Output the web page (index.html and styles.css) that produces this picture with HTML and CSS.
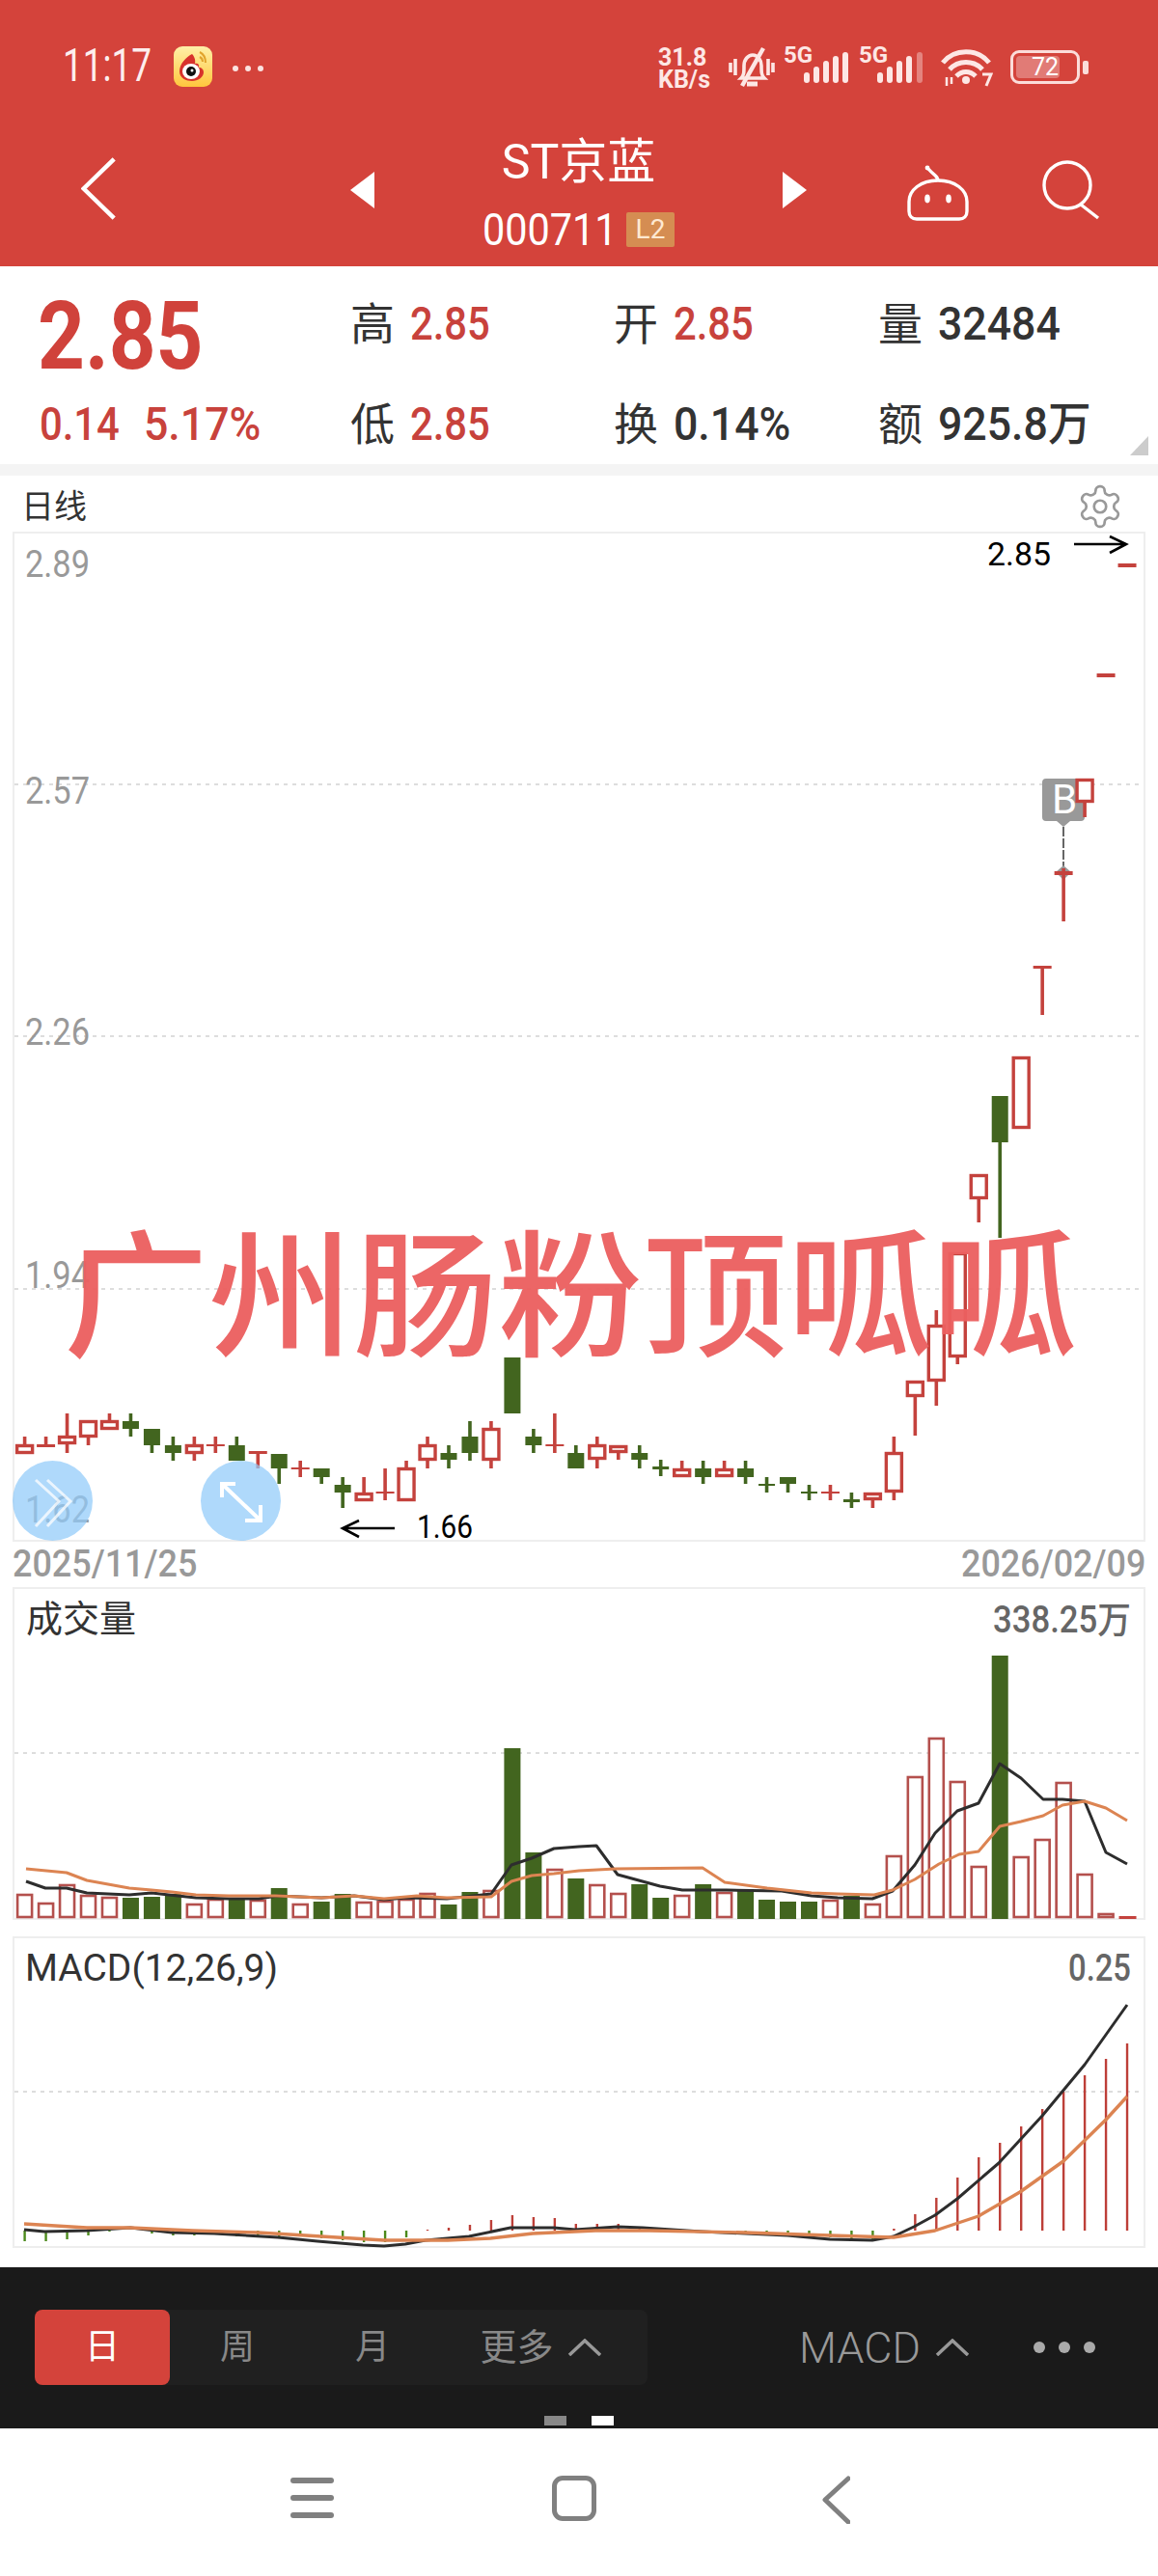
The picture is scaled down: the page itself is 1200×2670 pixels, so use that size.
FILE: index.html
```html
<!DOCTYPE html>
<html lang="zh-CN">
<head>
    <meta charset="UTF-8">
    <meta name="viewport" content="width=device-width, initial-scale=1.0">
    <title>ST京蓝 000711</title>
    <link rel="stylesheet" href="styles.css">
</head>
<body>
    <div class="top">
        <div class="status">
            <div class="status-left">
                <span class="time sq">11:17</span>
                <svg class="weibo" viewBox="0 0 40 42">
                    <defs>
                        <linearGradient id="wb" x1="0" y1="0" x2="0" y2="1">
                            <stop offset="0" stop-color="#fff0a8"/>
                            <stop offset="1" stop-color="#ffc63d"/>
                        </linearGradient>
                    </defs>
                    <rect width="40" height="42" rx="9" fill="url(#wb)"/>
                    <path d="M19 8c-6 3-13 10-13 18 0 7 7 10 13 10s12-4 12-9c0-3-2-5-5-5 1-3-1-5-4-4 1-4-1-8-3-10z" fill="#d8322c"/>
                    <ellipse cx="18" cy="26" rx="9" ry="8" fill="#fff"/>
                    <circle cx="18" cy="26" r="5" fill="#111"/>
                    <circle cx="19" cy="25" r="1.5" fill="#fff"/>
                    <path d="M27 6c4 2 6 6 6 11M27 11c2 1 3 3 3 5" fill="none" stroke="#e2a32c" stroke-width="2"/>
                </svg>
                <div class="more-dots"><i></i><i></i><i></i></div>
            </div>
            <div class="status-right">
                <div class="speed"><span>31.8</span><span>KB/s</span></div>
                <svg class="bell" viewBox="0 0 48 44" fill="none" stroke="#fde7e5" stroke-width="3.6">
                    <path d="M13 33c3-3 3-6 3-13 0-6 4-11 9-11s9 5 9 11c0 7 0 10 3 13z"/>
                    <path d="M19 39h11" stroke-width="5"/>
                    <path d="M36 2 14 41" stroke-width="4.5"/>
                    <path d="M2 17v10M7 13v17M46 17v10M41 13v17"/>
                </svg>
                <svg class="signal" viewBox="0 0 69 38">
                    <text class="net" x="0" y="17">5G</text>
                    <g fill="#fde7e5">
                        <rect x="21" y="27" width="6" height="11" rx="3"/>
                        <rect x="31" y="21" width="6" height="17" rx="3"/>
                        <rect x="41" y="15" width="6" height="23" rx="3"/>
                        <rect x="51" y="10" width="6" height="28" rx="3"/>
                        <rect x="61" y="6" width="6" height="32" rx="3"/>
                    </g>
                </svg>
                <svg class="signal" viewBox="0 0 69 38">
                    <text class="net" x="0" y="17">5G</text>
                    <g fill="#fde7e5">
                        <rect x="19" y="27" width="6" height="11" rx="3"/>
                        <rect x="29" y="21" width="6" height="17" rx="3"/>
                        <rect x="39" y="15" width="6" height="23" rx="3"/>
                        <rect x="49" y="10" width="6" height="28" rx="3"/>
                        <rect x="60" y="6" width="6" height="32" rx="3" opacity=".4"/>
                    </g>
                </svg>
                <svg class="wifi" viewBox="0 0 54 40" fill="none" stroke="#fde7e5" stroke-width="5">
                    <path d="M2 15C14 0 38 0 50 15"/>
                    <path d="M9 22c9-10 25-10 34 0"/>
                    <path d="M16 29c6-6 14-6 20 0"/>
                    <circle cx="26" cy="33" r="4" fill="#fde7e5" stroke="none"/>
                    <path d="M6 30v9M11 30v7" stroke-width="2.5"/>
                    <path d="M43 27h9l-5 12" stroke-width="3"/>
                </svg>
                <div class="battery">
                    <div class="battery-fill"></div>
                    <span class="battery-num">72</span>
                </div>
                <div class="battery-nub"></div>
            </div>
        </div>
        <div class="nav">
            <svg class="back" viewBox="0 0 40 70" fill="none" stroke="#fff" stroke-width="5">
                <path d="M38 1 3 35l35 34"/>
            </svg>
            <div class="tri tri-left"></div>
            <div class="title">
                <div class="title-name">ST京蓝</div>
                <div class="title-code">
                    <span class="code sq">000711</span>
                    <span class="badge-l2">L2</span>
                </div>
            </div>
            <div class="tri tri-right"></div>
            <svg class="robot" viewBox="0 0 64 58" fill="none" stroke="#fff" stroke-width="3.4">
                <path d="M32 17c0-6-4-6-10-13"/>
                <circle cx="21" cy="3" r="2.4" fill="#fff" stroke="none"/>
                <path d="M2 38C2 26 14 16 32 16s30 10 30 22v10c0 5-3 8-8 8H10c-5 0-8-3-8-8z"/>
                <ellipse cx="21" cy="35" rx="2.8" ry="4.4" fill="#fff" stroke="none"/>
                <ellipse cx="43" cy="35" rx="2.8" ry="4.4" fill="#fff" stroke="none"/>
            </svg>
            <svg class="search" viewBox="0 0 60 62" fill="none" stroke="#fff" stroke-width="3.4">
                <circle cx="26" cy="26" r="24"/>
                <path d="M40 46 58 60"/>
            </svg>
        </div>
    </div>

    <div class="quote">
        <div class="cell"><span class="price sq">2.85</span></div>
        <div class="cell"><span class="lab">高</span><span class="val up sq">2.85</span></div>
        <div class="cell"><span class="lab">开</span><span class="val up sq">2.85</span></div>
        <div class="cell"><span class="lab">量</span><span class="val wide sq">32484</span></div>
        <div class="cell change"><span class="val up sq">0.14</span><span class="val up wide sq">5.17%</span></div>
        <div class="cell"><span class="lab">低</span><span class="val up sq">2.85</span></div>
        <div class="cell"><span class="lab">换</span><span class="val wide sq">0.14%</span></div>
        <div class="cell"><span class="lab">额</span><span class="val wide sq">925.8万</span></div>
        <div class="corner"></div>
    </div>
    <div class="divider"></div>

    <div class="charts">
        <div class="chart-head">
            <span>日线</span>
            <svg class="gear" viewBox="0 0 24 24" fill="none" stroke="#999" stroke-width="1.3">
                <path d="M12.22 2h-.44a2 2 0 0 0-2 2v.18a2 2 0 0 1-1 1.73l-.43.25a2 2 0 0 1-2 0l-.15-.08a2 2 0 0 0-2.73.73l-.22.38a2 2 0 0 0 .73 2.73l.15.1a2 2 0 0 1 1 1.72v.51a2 2 0 0 1-1 1.74l-.15.09a2 2 0 0 0-.73 2.73l.22.38a2 2 0 0 0 2.73.73l.15-.08a2 2 0 0 1 2 0l.43.25a2 2 0 0 1 1 1.73V20a2 2 0 0 0 2 2h.44a2 2 0 0 0 2-2v-.18a2 2 0 0 1 1-1.73l.43-.25a2 2 0 0 1 2 0l.15.08a2 2 0 0 0 2.73-.73l.22-.39a2 2 0 0 0-.73-2.73l-.15-.08a2 2 0 0 1-1-1.74v-.5a2 2 0 0 1 1-1.74l.15-.09a2 2 0 0 0 .73-2.73l-.22-.38a2 2 0 0 0-2.73-.73l-.15.08a2 2 0 0 1-2 0l-.43-.25a2 2 0 0 1-1-1.73V4a2 2 0 0 0-2-2z"/>
                <circle cx="12" cy="12" r="3"/>
            </svg>
        </div>
        <div class="panel kline">
            <svg id="klineSvg" class="plot" viewBox="15 553 1170 1043"></svg>
            <div class="float-btn btn-one">
                <svg viewBox="0 0 83 83" fill="none" stroke="#fff" stroke-width="3" opacity=".75">
                    <path d="M24 20 48 42 24 68M36 20 60 42 36 68"/>
                </svg>
            </div>
            <div class="float-btn btn-two">
                <svg viewBox="0 0 83 83" fill="none" stroke="#fff" stroke-width="4">
                    <path d="M22 24 62 62M22 38V24h14M62 46v16H46"/>
                </svg>
            </div>
            <div class="slogan">广州肠粉顶呱呱</div>
        </div>
        <div class="dates">
            <span class="date sq">2025/11/25</span>
            <span class="date sq date-end">2026/02/09</span>
        </div>
        <div class="panel volume">
            <svg id="volSvg" class="plot" viewBox="15 1647 1170 341"></svg>
        </div>
        <div class="panel macd">
            <svg id="macdSvg" class="plot" viewBox="15 2009 1170 319"></svg>
        </div>
    </div>

    <div class="bar">
        <div class="bar-row">
            <div class="periods">
                <span class="period active">日</span>
                <span class="period">周</span>
                <span class="period">月</span>
                <span class="period period-more">更多
                    <svg class="caret" viewBox="0 0 36 18" fill="none" stroke="#999" stroke-width="3.5"><path d="M2 17 18 2l16 15"/></svg>
                </span>
            </div>
            <span class="indicator">MACD
                <svg class="caret" viewBox="0 0 36 18" fill="none" stroke="#999" stroke-width="3.5"><path d="M2 17 18 2l16 15"/></svg>
            </span>
            <div class="dots"><i></i><i></i><i></i></div>
        </div>
        <div class="pager"><i></i><i class="on"></i></div>
    </div>

    <div class="sysnav">
        <div class="burger"><i></i><i></i><i></i></div>
        <div class="home"></div>
        <svg class="sys-back" viewBox="0 0 30 50" fill="none" stroke="#808080" stroke-width="5" stroke-linecap="round" stroke-linejoin="round">
            <path d="M28 3 4 25l24 23"/>
        </svg>
    </div>

    <script>
    const NS = 'http://www.w3.org/2000/svg'
    const RED = '#c4423d'
    const GREEN = '#42651f'
    const X0 = 25.6
    const STEP = 21.97

    function add(svg, tag, attrs, text) {
        const el = document.createElementNS(NS, tag)
        for (const k in attrs) el.setAttribute(k, attrs[k])
        if (text) el.textContent = text
        svg.appendChild(el)
        return el
    }

    function gridLine(svg, y) {
        add(svg, 'line', { x1: 15, x2: 1185, y1: y, y2: y, class: 'grid' })
    }

    function polyline(svg, pts, color, width) {
        add(svg, 'polyline', {
            points: pts.map(p => p.join(',')).join(' '),
            fill: 'none', stroke: color, 'stroke-width': width, 'stroke-linejoin': 'round'
        })
    }

    // type, wick top, body top, body bottom, wick bottom
    const candles = [
        ['r',1489,1497,1507,1507],['r',1489,1497,1500,1500],['r',1465,1488,1497,1506],['r',1472,1472,1490,1498],
        ['r',1465,1472,1482,1482],['g',1465,1473,1481,1489],['g',1481,1481,1498,1506],['g',1489,1498,1506,1514],
        ['r',1489,1497,1507,1514],['r',1489,1497,1499,1506],['g',1489,1498,1514,1514],['r',1504,1504,1507,1522],
        ['g',1507,1507,1522,1538],['r',1514,1521,1523,1531],['g',1522,1522,1531,1538],['g',1531,1539,1547,1563],
        ['r',1531,1547,1556,1556],['r',1522,1546,1548,1555],['r',1514,1521,1556,1556],['r',1489,1497,1514,1522],
        ['g',1498,1506,1513,1522],['g',1473,1489,1506,1514],['r',1473,1480,1514,1522],['g',1407,1407,1465,1465],
        ['g',1481,1489,1498,1506],['r',1465,1497,1499,1506],['g',1498,1506,1522,1522],['r',1489,1497,1513,1522],
        ['r',1498,1498,1506,1513],['g',1498,1506,1513,1522],['g',1513,1520,1523,1530],['r',1514,1522,1531,1531],
        ['g',1514,1522,1531,1538],['r',1514,1522,1531,1531],['g',1514,1522,1531,1538],['g',1531,1538,1540,1547],
        ['g',1531,1531,1538,1547],['g',1539,1546,1548,1555],['r',1539,1546,1548,1555],['g',1547,1554,1557,1563],
        ['r',1547,1547,1555,1563],['r',1489,1505,1547,1555],['r',1431,1431,1448,1488],['r',1358,1373,1432,1457],
        ['r',1298,1298,1407,1414],['r',1217,1217,1243,1267],['g',1136,1136,1184,1283],['r',1095,1095,1170,1170],
        ['r',1001,1001,1004,1052],['r',900,903,907,955],['r',807,807,832,847],['r',698,698,702,702],['r',584,584,588,588]
    ]

    function drawKline() {
        const svg = document.getElementById('klineSvg')
        ;[813, 1074, 1336].forEach(y => gridLine(svg, y))
        const labels = [['2.89', 598], ['2.57', 833], ['2.26', 1083], ['1.94', 1335], ['1.62', 1578]]
        labels.forEach(l => add(svg, 'text', { x: 26, y: l[1], class: 'axis', textLength: 67, lengthAdjust: 'spacingAndGlyphs' }, l[0]))

        // B marker
        add(svg, 'path', { d: 'M1084 807h36a4 4 0 0 1 4 4v36a4 4 0 0 1-4 4h-11l-7 6-7-6h-11a4 4 0 0 1-4-4v-36a4 4 0 0 1 4-4z', fill: '#999' })
        add(svg, 'text', { x: 1090, y: 843, class: 'mark' }, 'B')
        add(svg, 'line', { x1: 1102, x2: 1102, y1: 857, y2: 900, stroke: '#666', 'stroke-width': 2, 'stroke-dasharray': '10 2' })
        add(svg, 'path', { d: 'M1094 904l8-7 8 7-8 8z', fill: '#999' })

        candles.forEach((c, i) => {
            const x = X0 + i * STEP
            const color = c[0] == 'r' ? RED : GREEN
            if (c[1] < c[2]) add(svg, 'line', { x1: x, x2: x, y1: c[1], y2: c[2], stroke: color, 'stroke-width': 3.6 })
            if (c[4] > c[3]) add(svg, 'line', { x1: x, x2: x, y1: c[3], y2: c[4], stroke: color, 'stroke-width': 3.6 })
            if (c[0] == 'r' && c[3] - c[2] > 4) {
                add(svg, 'rect', { x: x - 8, y: c[2] + 1.5, width: 16, height: c[3] - c[2] - 3, fill: '#fff', stroke: color, 'stroke-width': 3.4 })
            } else {
                const w = c[0] == 'r' ? 19 : 17
                add(svg, 'rect', { x: x - w / 2, y: c[2], width: w, height: c[3] - c[2], fill: color })
            }
        })

        add(svg, 'text', { x: 1023, y: 586, class: 'note', textLength: 66, lengthAdjust: 'spacingAndGlyphs' }, '2.85')
        add(svg, 'path', { d: 'M1113 564h54M1150 556l17 8-17 9', fill: 'none', stroke: '#000', 'stroke-width': 2.6 })
        add(svg, 'text', { x: 432, y: 1594, class: 'note', textLength: 58, lengthAdjust: 'spacingAndGlyphs' }, '1.66')
        add(svg, 'path', { d: 'M409 1584h-54M372 1576l-17 8 17 9', fill: 'none', stroke: '#000', 'stroke-width': 2.6 })
    }

    function drawVolume() {
        const svg = document.getElementById('volSvg')
        gridLine(svg, 1817)
        add(svg, 'text', { x: 27, y: 1691, class: 'panel-name' }, '成交量')
        add(svg, 'text', { x: 1029, y: 1692, class: 'panel-val', textLength: 143, lengthAdjust: 'spacingAndGlyphs' }, '338.25万')

        const bars = [
            ['r',1963],['r',1972],['r',1953],['r',1964],['r',1966],['g',1967],['g',1966],['g',1963],['r',1973],['r',1968],
            ['g',1968],['r',1969],['g',1957],['r',1973],['g',1971],['g',1963],['r',1971],['r',1970],['r',1968],['r',1962],
            ['g',1974],['g',1961],['r',1959],['g',1812],['g',1920],['r',1937],['g',1947],['r',1953],['r',1962],['g',1953],
            ['g',1967],['r',1964],['g',1953],['r',1961],['g',1958],['g',1969],['g',1971],['g',1971],['r',1969],['g',1965],
            ['r',1973],['r',1923],['r',1841],['r',1801],['r',1846],['r',1934],['g',1716],['r',1924],['r',1906],['r',1847],
            ['r',1942],['r',1983],['s',1986]
        ]
        bars.forEach((b, i) => {
            const x = X0 + i * STEP
            if (b[0] == 'r') {
                add(svg, 'rect', { x: x - 7.5, y: b[1] + 1, width: 15, height: 1988 - b[1] - 2, fill: '#fff', stroke: '#b4504d', 'stroke-width': 2.6 })
            } else {
                add(svg, 'rect', { x: x - 8.5, y: b[1], width: b[0] == 's' ? 18 : 17, height: 1989 - b[1], fill: b[0] == 's' ? RED : GREEN })
            }
        })

        polyline(svg, [[27,1950],[47,1957],[69,1957],[90,1962],[134,1964],[157,1962],[184,1965],[203,1967],[237,1968],[268,1968],[288,1965],[333,1967],[367,1965],[398,1969],[421,1967],[463,1968],[509,1963],[530,1933],[551,1926],[574,1916],[600,1914],[618,1913],[640,1943],[684,1955],[707,1959],[753,1959],[810,1960],[841,1965],[868,1967],[904,1968],[925,1960],[948,1933],[969,1900],[992,1877],[1014,1869],[1036,1828],[1058,1843],[1081,1865],[1101,1865],[1124,1867],[1146,1920],[1168,1932]], '#2d2d2d', 3)
        polyline(svg, [[27,1937],[69,1941],[90,1949],[134,1957],[157,1959],[178,1961],[203,1964],[237,1965],[287,1965],[333,1967],[367,1965],[398,1968],[432,1965],[463,1967],[509,1966],[530,1950],[551,1944],[574,1942],[600,1939],[638,1937],[728,1936],[751,1951],[795,1957],[841,1962],[868,1963],[906,1964],[925,1959],[948,1948],[973,1932],[994,1922],[1014,1919],[1036,1893],[1058,1888],[1081,1882],[1101,1871],[1124,1867],[1146,1874],[1168,1887]], '#dc8452', 3)
    }

    function drawMacd() {
        const svg = document.getElementById('macdSvg')
        gridLine(svg, 2168)
        add(svg, 'text', { x: 26, y: 2053, class: 'panel-name', textLength: 262, lengthAdjust: 'spacingAndGlyphs' }, 'MACD(12,26,9)')
        add(svg, 'text', { x: 1107, y: 2053, class: 'panel-val', textLength: 65, lengthAdjust: 'spacingAndGlyphs' }, '0.25')

        const zero = 2312
        const hist = [2323,2323,2321,2317,2313,2312,2315,2317,2317,2315,2318,2317,2318,2318,2320,2322,2324,2324,2319,
            2311,2309,2306,2301,2296,2298,2299,2305,2305,2305,2309,2312,2312,2312,2313,2313,2313,2315,2317,2319,2322,2322,
            2310,2295,2278,2257,2236,2221,2204,2186,2168,2151,2134,2118]
        hist.forEach((y, i) => {
            const x = X0 + i * STEP
            add(svg, 'line', { x1: x, x2: x, y1: zero, y2: y, stroke: y > zero ? '#4c8a1c' : '#bd3f38', 'stroke-width': 2.4 })
        })

        polyline(svg, [[25,2311],[46,2313],[90,2312],[135,2309],[178,2314],[222,2315],[288,2319],[329,2323],[376,2327],[398,2328],[420,2326],[441,2322],[486,2318],[529,2309],[574,2309],[596,2311],[640,2308],[666,2309],[727,2313],[816,2317],[860,2321],[904,2322],[926,2318],[947,2308],[969,2296],[992,2279],[1035,2242],[1080,2193],[1124,2140],[1168,2078]], '#2d2d2d', 3)
        polyline(svg, [[25,2305],[90,2309],[135,2309],[200,2312],[267,2314],[333,2318],[398,2322],[464,2322],[508,2320],[552,2315],[617,2312],[673,2312],[772,2314],[860,2317],[926,2319],[969,2312],[1014,2297],[1057,2272],[1102,2240],[1146,2197],[1168,2173]], '#dc8452', 3.4)
    }

    drawKline()
    drawVolume()
    drawMacd()
    </script>
</body>
</html>
```

FILE: styles.css
```css
* {
    box-sizing: border-box;
}
body {
    margin: 0;
    width: 1200px;
    background-color: #fff;
    font-family: Roboto, "Noto Sans CJK SC", sans-serif;
    color: #333;
}
.sq {
    display: inline-block;
    transform: scaleX(.87);
    transform-origin: 0 50%;
    white-space: nowrap;
}

/* red header */
.top {
    background-color: #d4433b;
    height: 276px;
    color: #fff;
}
.status {
    height: 130px;
    display: flex;
    justify-content: space-between;
    padding: 48px 72px 0 65px;
}
.status-left,
.status-right {
    display: flex;
    align-items: flex-start;
}
.time {
    width: 115px;
    font-size: 48px;
    line-height: 40px;
    transform: scaleX(.77);
    color: #fdeeee;
}
.weibo {
    width: 40px;
    height: 42px;
}
.more-dots {
    display: flex;
    gap: 7px;
    margin: 20px 0 0 21px;
}
.more-dots i {
    width: 6px;
    height: 6px;
    border-radius: 50%;
    background-color: #fbe3e1;
}
.speed {
    width: 57px;
    display: flex;
    flex-direction: column;
    font-size: 25px;
    line-height: 23px;
    font-weight: 700;
    white-space: nowrap;
    color: #fde7e5;
}
.bell {
    width: 48px;
    height: 44px;
    margin-left: 16px;
}
.signal {
    width: 69px;
    height: 38px;
    margin-left: 9px;
    overflow: visible;
}
.net {
    font-size: 24px;
    font-weight: 700;
    fill: #fde7e5;
}
.wifi {
    width: 54px;
    height: 40px;
    margin: 2px 0 0 16px;
}
.battery {
    position: relative;
    width: 72px;
    height: 35px;
    margin: 4px 0 0 18px;
    border: 3px solid #fbdcd9;
    border-radius: 9px;
    text-align: center;
}
.battery-fill {
    position: absolute;
    left: 3px;
    top: 3px;
    bottom: 3px;
    width: 45px;
    border-radius: 4px;
    background-color: rgba(255, 255, 255, .3);
}
.battery-num {
    position: relative;
    font-size: 25px;
    line-height: 29px;
    color: #fff;
}
.battery-nub {
    width: 6px;
    height: 14px;
    margin: 15px 0 0 3px;
    border-radius: 2px;
    background-color: #fbdcd9;
}
.nav {
    height: 146px;
    display: grid;
    grid-template-columns: 279px 25px 423px 25px 168px 136px;
    align-items: center;
    padding-left: 84px;
}
.back {
    width: 36px;
    height: 67px;
    margin-top: -15px;
}
.tri {
    width: 0;
    height: 0;
    border-top: 19px solid transparent;
    border-bottom: 19px solid transparent;
    margin-top: -12px;
}
.tri-left {
    border-right: 25px solid #fff;
}
.tri-right {
    border-left: 25px solid #fff;
}
.title {
    text-align: center;
    margin-top: -12px;
}
.title-name {
    font-size: 50px;
    line-height: 60px;
    height: 81px;
}
.title-code {
    display: flex;
    justify-content: center;
    align-items: center;
    gap: 15px;
}
.code {
    width: 134px;
    font-size: 46px;
    line-height: 38px;
    transform: scaleX(.9);
}
.badge-l2 {
    width: 50px;
    height: 36px;
    background-color: #d58d52;
    border-radius: 2px;
    font-size: 28px;
    line-height: 36px;
    color: #ffe9d2;
}
.robot {
    width: 64px;
    height: 58px;
    justify-self: end;
    margin-top: -6px;
}
.search {
    width: 60px;
    height: 62px;
    justify-self: end;
    margin-top: -12px;
}

/* quote block */
.quote {
    position: relative;
    height: 205px;
    display: grid;
    grid-template-columns: 324px 273px 274px 1fr;
    grid-auto-rows: 80px;
    row-gap: 24px;
    padding: 20px 0 0 41px;
}
.cell {
    display: flex;
    align-items: center;
    gap: 14px;
}
.lab {
    width: 46px;
    margin-left: -2px;
    font-size: 46px;
    line-height: 80px;
}
.val {
    font-size: 48px;
    font-weight: 500;
    line-height: 80px;
    width: 100px;
    margin-left: 2px;
    color: #333;
}
.val.wide {
    transform: scaleX(.93);
}
.val.up {
    color: #c8423c;
}
.change {
    gap: 8px;
}
.change .val {
    margin-left: 0;
}
.price {
    margin: 26px 0 0 -2px;
    font-size: 98px;
    font-weight: 700;
    line-height: 80px;
    color: #d0423b;
}
.corner {
    position: absolute;
    right: 10px;
    top: 176px;
    width: 0;
    height: 0;
    border-left: 19px solid transparent;
    border-bottom: 20px solid #ccc;
}
.divider {
    height: 12px;
    background-color: #f4f4f4;
}

/* charts */
.charts {
    padding: 0 13px;
    height: 1857px;
}
.chart-head {
    height: 58px;
    display: flex;
    justify-content: space-between;
    align-items: center;
    padding: 0 30px 0 9px;
    font-size: 34px;
}
.gear {
    width: 50px;
    height: 50px;
    margin: 6px -8px 0 0;
}
.panel {
    position: relative;
    border: 2px solid #eee;
    background-color: #fff;
}
.plot {
    display: block;
    width: 100%;
    height: 100%;
    overflow: visible;
}
.kline {
    height: 1047px;
}
.volume {
    height: 345px;
}
.macd {
    height: 323px;
    margin-top: 17px;
}
.grid {
    stroke: #ddd;
    stroke-width: 2;
    stroke-dasharray: 4 5;
}
.axis {
    font-family: Roboto, sans-serif;
    font-size: 38px;
    fill: #999;
}
.mark {
    font-family: Roboto, sans-serif;
    font-size: 42px;
    fill: #fff;
}
.note {
    font-family: Roboto, sans-serif;
    font-size: 34px;
    fill: #000;
}
.panel-name {
    font-family: Roboto, "Noto Sans CJK SC", sans-serif;
    font-size: 38px;
    fill: #333;
}
.panel-val {
    font-family: Roboto, "Noto Sans CJK SC", sans-serif;
    font-size: 38px;
    font-weight: 500;
    fill: #666;
}
.float-btn {
    position: absolute;
    top: 961px;
    width: 83px;
    height: 83px;
    border-radius: 50%;
    background-color: rgba(144, 202, 249, .72);
}
.float-btn svg {
    display: block;
}
.btn-one {
    left: -2px;
}
.btn-two {
    left: 193px;
}
.slogan {
    position: absolute;
    left: 51px;
    top: 695px;
    font-family: "Noto Sans CJK SC", sans-serif;
    font-size: 150px;
    font-weight: 500;
    line-height: 170px;
    white-space: nowrap;
    color: #ec6060;
    opacity: .96;
    transform: scaleY(.95);
    transform-origin: 0 50%;
}
.dates {
    height: 47px;
    display: flex;
    justify-content: space-between;
    align-items: center;
}
.date {
    width: 190px;
    font-size: 38px;
    line-height: 47px;
    font-weight: 500;
    color: #999;
    transform: scaleX(.945);
}
.date-end {
    margin-right: 1px;
}

/* dark tool bar */
.bar {
    height: 167px;
    background-color: #1a1a1a;
    padding: 44px 0 0 36px;
}
.bar-row {
    display: flex;
    align-items: center;
    height: 78px;
}
.periods {
    width: 635px;
    height: 78px;
    display: flex;
    align-items: center;
    background-color: #202020;
    border-radius: 8px;
}
.period {
    width: 140px;
    text-align: center;
    font-size: 36px;
    line-height: 78px;
    color: #888;
}
.period.active {
    height: 78px;
    background-color: #d4433b;
    border-radius: 8px;
    color: #fff;
}
.period-more {
    width: 215px;
    display: flex;
    justify-content: center;
    align-items: center;
    gap: 14px;
    font-size: 38px;
    padding-right: 6px;
}
.caret {
    width: 36px;
    height: 18px;
}
.indicator {
    display: flex;
    align-items: center;
    gap: 15px;
    margin-left: 157px;
    font-size: 45px;
    font-weight: 300;
    color: #999;
}
.dots {
    display: flex;
    gap: 14px;
    margin-left: 66px;
}
.dots i {
    width: 12px;
    height: 12px;
    border-radius: 50%;
    background-color: #aaa;
}
.pager {
    display: flex;
    justify-content: center;
    gap: 26px;
    margin: 32px 0 0 -36px;
}
.pager i {
    width: 23px;
    height: 10px;
    background-color: #888;
}
.pager i.on {
    background-color: #fff;
}

/* system nav */
.sysnav {
    height: 153px;
    position: relative;
    display: flex;
    padding: 49px 0 0 301px;
}
.burger {
    width: 45px;
    height: 42px;
    margin-top: 2px;
    display: flex;
    flex-direction: column;
    justify-content: space-between;
}
.burger i {
    height: 6px;
    border-radius: 3px;
    background-color: #808080;
}
.home {
    width: 46px;
    height: 47px;
    margin-left: 226px;
    border: 5px solid #808080;
    border-radius: 11px;
}
.sys-back {
    width: 30px;
    height: 50px;
    margin-left: 233px;
}
```
